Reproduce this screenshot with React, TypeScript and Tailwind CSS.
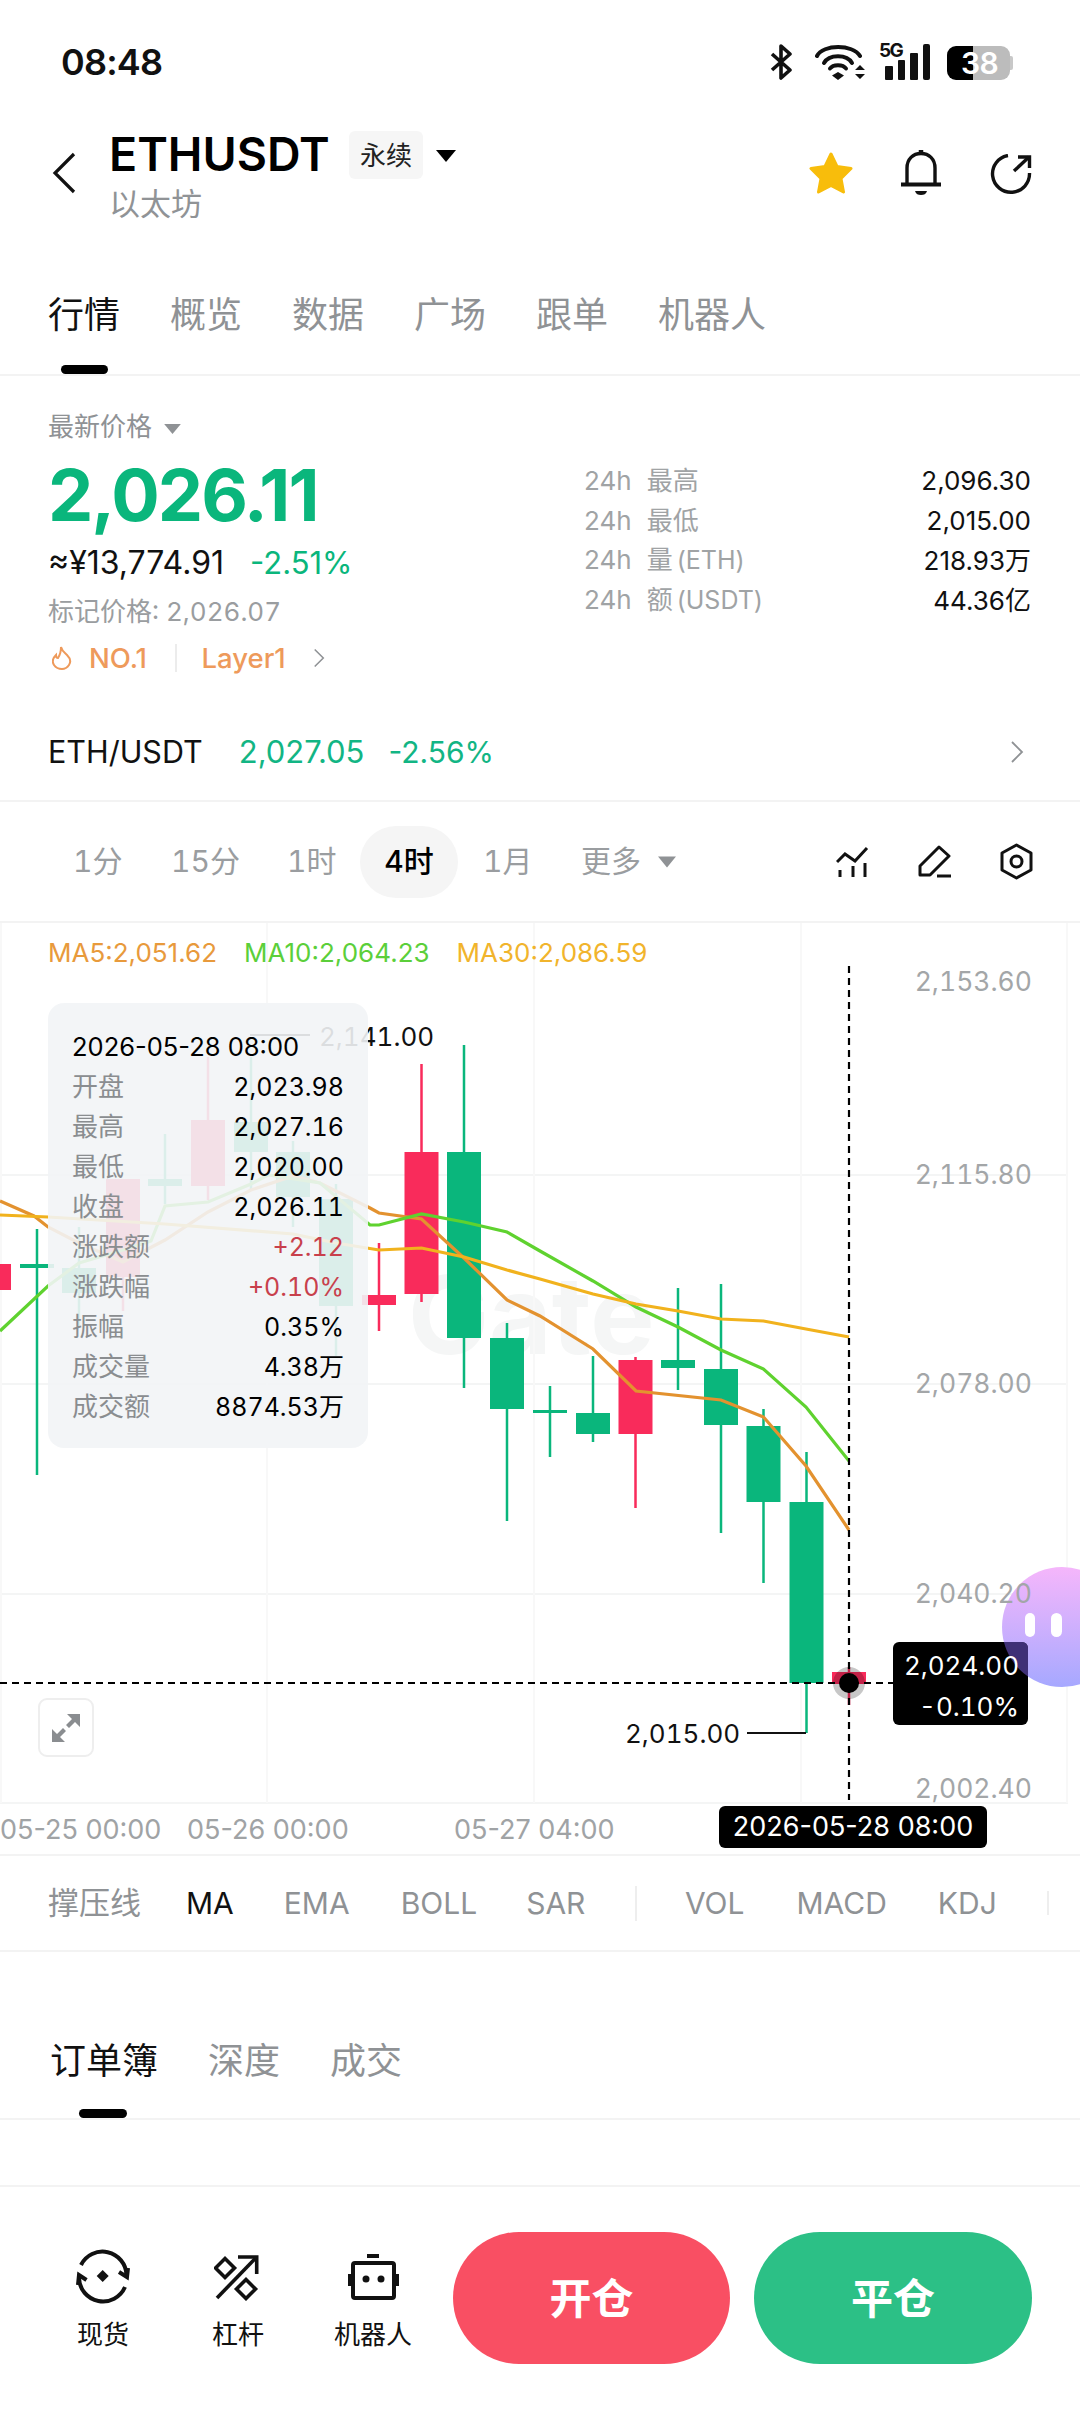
import { ReactNode } from "react";

const RED = "#f92b5b";
const GREEN = "#0ab67c";

// cx, wick top, wick bottom, body top, body bottom, colour (page coordinates)
const candles: [number, number, number, number, number, string][] = [
  [-6, 1235, 1300, 1264, 1290, RED],
  [37, 1229, 1475, 1264, 1268, GREEN],
  [79, 1227, 1327, 1268, 1293, GREEN],
  [123, 1179, 1311, 1179, 1277, RED],
  [165, 1134, 1204, 1179, 1186, GREEN],
  [208, 1057, 1200, 1120, 1186, RED],
  [251, 1057, 1190, 1122, 1152, GREEN],
  [293, 1141, 1227, 1152, 1197, GREEN],
  [336, 1184, 1356, 1199, 1306, GREEN],
  [379, 1243, 1331, 1295, 1305, RED],
  [421.5, 1064, 1302, 1152, 1294, RED],
  [464, 1045, 1388, 1152, 1338, GREEN],
  [507, 1323, 1521, 1338, 1409, GREEN],
  [550, 1386, 1457, 1410, 1413, GREEN],
  [593, 1356, 1442, 1413, 1434, GREEN],
  [635.5, 1357, 1508, 1360, 1434, RED],
  [678, 1288, 1390, 1360, 1368, GREEN],
  [721, 1284, 1533, 1369, 1425, GREEN],
  [763.5, 1409, 1583, 1426, 1502, GREEN],
  [806.5, 1452, 1733, 1502, 1683, GREEN],
  [849, 1667, 1705, 1672, 1684, RED],
];

const ma5 = "0,1201 34,1216 48,1227 79,1243 123,1262 165,1240 208,1212 251,1190 293,1176 320,1183 370,1208 379,1213 421.5,1219 465,1259 507,1300 540,1316 593,1349 636,1391 721,1400 763.5,1417 806,1466 849,1530";
const ma10 = "0,1331 48,1286 79,1263 123,1250 151,1241 165,1206 208,1202 251,1184 268,1175 320,1183 370,1225 379,1225 421.5,1214 464,1222 507,1232 540,1251 593,1281 636,1307 678,1327 721,1350 763.5,1369 806,1407 849,1461";
const ma30 = "0,1215 48,1217 165,1224 293,1234 336,1243 379,1250 421.5,1248 464,1257 507,1270 540,1279 593,1294 636,1304 678,1311 721,1319 763.5,1321 806,1329 849,1337";

const tooltipRows: [string, string, string][] = [
  ["开盘", "2,023.98", "text-black"],
  ["最高", "2,027.16", "text-black"],
  ["最低", "2,020.00", "text-black"],
  ["收盘", "2,026.11", "text-black"],
  ["涨跌额", "+2.12", "text-[#c8404c]"],
  ["涨跌幅", "+0.10%", "text-[#c8404c]"],
  ["振幅", "0.35%", "text-black"],
  ["成交量", "4.38万", "text-black"],
  ["成交额", "8874.53万", "text-black"],
];

const stats: [string, string, string][] = [
  ["最高", "", "2,096.30"],
  ["最低", "", "2,015.00"],
  ["量", "(ETH)", "218.93万"],
  ["额", "(USDT)", "44.36亿"],
];

function Triangle({ className }: { className: string }) {
  return (
    <svg viewBox="0 0 20 12" className={className} fill="currentColor">
      <path d="M0 0h20L10 12z" />
    </svg>
  );
}

function Chevron({ className }: { className: string }) {
  return (
    <svg viewBox="0 0 14 22" className={className} fill="none" stroke="currentColor" strokeWidth="1.8">
      <path d="M2 1l10 10L2 21" />
    </svg>
  );
}

function StatusBar() {
  return (
    <div className="flex h-[100px] items-start justify-between pl-[61px] pr-[67px] pt-[44px]">
      <span className="text-[36px] font-semibold leading-[36px] tracking-[-0.8px] text-[#111]">08:48</span>
      <div className="flex items-start">
        <svg viewBox="0 0 22 36" className="h-[36px] w-[22px]" fill="none" stroke="#111" strokeWidth="3.6" strokeLinejoin="round">
          <path d="M2 10l18 16-9 8V2l9 8L2 26" />
        </svg>
        <svg viewBox="815 44 52 36" className="ml-[23px] h-[36px] w-[52px]" fill="none" stroke="#111" strokeWidth="4" strokeLinecap="round">
          <path d="M817 56C823 44 853 44 860 56" />
          <path d="M824 63C829 54 847 54 852 63" />
          <path d="M830 68.5C833 64 843 64 846 68.5" />
          <path d="M838 72l6 3.5-6 4.5-6-4.5z" fill="#111" stroke="none" />
          <path d="M860 65l5 5h-10zM860 79l5-5h-10z" fill="#111" stroke="none" />
        </svg>
        <div className="relative ml-[12px] h-[36px] w-[51px]">
          <span className="absolute left-0 top-[-3px] text-[19px] font-bold leading-[20px] tracking-[-1.6px] text-[#111]">5G</span>
          <div className="absolute bottom-0 right-0 flex items-end gap-[5px]">
            <div className="h-[14px] w-[7.5px] rounded-[1px] bg-[#111]" />
            <div className="h-[20px] w-[7.5px] rounded-[1px] bg-[#111]" />
            <div className="h-[27px] w-[7.5px] rounded-[1px] bg-[#111]" />
            <div className="h-[36px] w-[7.5px] rounded-[2px] bg-[#111]" />
          </div>
        </div>
        <div className="relative ml-[17px] mt-[2px] flex h-[34px] w-[66px]">
          <div className="h-full w-[26px] rounded-l-[9px] bg-black" />
          <div className="h-full w-[37px] rounded-r-[9px] bg-[#bcbcbc]" />
          <div className="mt-[10px] h-[14px] w-[3px] rounded-r-[2px] bg-[#c8c8c8]" />
          <span className="absolute left-[14px] top-0 text-[30px] font-semibold leading-[34px] tracking-[-0.5px] text-white">38</span>
        </div>
      </div>
    </div>
  );
}

function Header() {
  return (
    <div className="flex h-[170px] items-start pl-[52px] pr-[48px]">
      <svg viewBox="0 0 24 42" className="mt-[52px] h-[42px] w-[24px]" fill="none" stroke="#111" strokeWidth="3.2">
        <path d="M22 2L3 21l19 19" />
      </svg>
      <div className="ml-[33px] mt-[26px]">
        <div className="flex items-start">
          <span className="w-[220px] text-[46.5px] font-semibold leading-[56px] text-black">ETHUSDT</span>
          <span className="ml-[20px] mt-[5px] flex h-[48px] w-[74px] items-center justify-center rounded-[6px] bg-[#f6f6f6] text-[26px] text-[#222]">永续</span>
          <Triangle className="ml-[13px] mt-[24px] h-[12px] w-[20px] text-black" />
        </div>
        <div className="mt-[2px] text-[31px] leading-[40px] text-[#909396]">以太坊</div>
      </div>
      <div className="ml-auto mt-[50px] flex items-start">
        <svg viewBox="0 0 46 42" className="mt-[2px] h-[42px] w-[46px]" fill="#f8bd0b" stroke="#f8bd0b" strokeWidth="3" strokeLinejoin="round">
          <path d="M23 2l6 12.500 14 2-10 10 2.500 13.500L23 33.500 10.500 40 13 26.500 3 16.500l14-2z" />
        </svg>
        <svg viewBox="901 150 40 45" className="ml-[47px] h-[45px] w-[40px]" fill="none" stroke="#111" strokeWidth="3.4">
          <path d="M921 150v5" strokeWidth="4.500" />
          <path d="M907 184v-16c0-9 6-14.500 14-14.500s14 5.500 14 14.500v16" />
          <path d="M901 184.500h40" strokeWidth="4" />
          <path d="M915 191h12c-1 3-3 4-6 4s-5-1-6-4z" fill="#111" stroke="none" />
        </svg>
        <svg viewBox="990 154 42 40" className="ml-[49px] mt-[4px] h-[40px] w-[42px]" fill="none" stroke="#111" strokeWidth="3.4">
          <path d="M1008 155.500A18.500 18.500 0 1 0 1029.500 173" />
          <path d="M1014 171l15-14" />
          <path d="M1018 157h11.500v11" />
        </svg>
      </div>
    </div>
  );
}

function Tabs() {
  const tabs = ["行情", "概览", "数据", "广场", "跟单", "机器人"];
  return (
    <div className="relative h-[106px] border-b-2 border-[#f3f3f3]">
      <div className="flex gap-[50px] pl-[48px] pt-[20px]">
        {tabs.map((t, i) => (
          <span key={t} className={i === 0 ? "text-[36px] leading-[50px] text-[#111]" : "text-[36px] leading-[50px] text-[#8f9295]"}>
            {t}
          </span>
        ))}
      </div>
      <div className="absolute left-[61px] top-[95px] h-[9px] w-[47px] rounded-[5px] bg-black" />
    </div>
  );
}

function PriceBlock() {
  return (
    <div className="flex h-[324px] justify-between pl-[48px] pr-[49px]">
      <div>
        <div className="mt-[35px] flex items-center text-[26px] leading-[32px] text-[#8f9295]">
          最新价格
          <Triangle className="ml-[12px] mt-[4px] h-[10px] w-[17px] text-[#8f9295]" />
        </div>
        <div className="mt-[8px] text-[72px] font-bold leading-[88px] tracking-[-2px] text-[#0ab67c]">2,026.11</div>
        <div className="mt-[4px] flex items-center leading-[40px]">
          <span className="text-[32px] text-[#111]">≈¥13,774.91</span>
          <span className="ml-[26px] text-[31px] text-[#0ab67c]">-2.51%</span>
        </div>
        <div className="mt-[9px] text-[26px] leading-[40px] tabular-nums text-[#9a9da0]">标记价格: 2,026.07</div>
        <div className="mt-[8px] flex items-center text-[27.5px] font-medium leading-[36px] text-[#ee9a5b]">
          <svg viewBox="0 0 20 24" className="ml-[4px] h-[24px] w-[20px]" fill="none" stroke="#ee9a5b" strokeWidth="2">
            <path d="M9 1c1 4 3 5 6 8 3 3 4 7 2 10-2 3-5 4-7 4s-6-1-8-4c-2-3-1-7 2-10 0 2 1 3 2 3 2-3 3-7 3-11z" />
          </svg>
          <span className="ml-[17px]">NO.1</span>
          <div className="ml-[28px] h-[28px] w-[1.5px] bg-[#ececec]" />
          <span className="ml-[25px]">Layer1</span>
          <Chevron className="ml-[27px] h-[20px] w-[12px] text-[#8f9295]" />
        </div>
      </div>
      <div className="mt-[84px] w-[447px]">
        {stats.map(([label, unit, value]) => (
          <div key={label} className="flex h-[40px] items-center justify-between text-[26px]">
            <span className="text-[#a0a3a5]">
              <span className="mr-[15px]">24h</span>
              {label}
              {unit && <span className="ml-[4px] text-[25px]">{unit}</span>}
            </span>
            <span className="text-[#111]">{value}</span>
          </div>
        ))}
      </div>
    </div>
  );
}

function SpotRow() {
  return (
    <div className="flex h-[102px] items-center border-b-2 border-[#f3f3f3] pl-[48px] pr-[56px] pt-[4px]">
      <span className="text-[30.5px] text-[#111]">ETH/USDT</span>
      <span className="ml-[36px] text-[31px] text-[#12b584]">2,027.05</span>
      <span className="ml-[24px] text-[30px] text-[#12b584]">-2.56%</span>
      <Chevron className="ml-auto h-[22px] w-[14px] text-[#8f9295]" />
    </div>
  );
}

function Timeframes() {
  return (
    <div className="flex h-[121px] items-center border-b-2 border-[#f3f3f3] pl-[73px] pr-[47px] text-[30px] tabular-nums text-[#9a9da0]">
      <span className="w-[98px]">1分</span>
      <span className="w-[116px]">15分</span>
      <span className="w-[73px]">1时</span>
      <span className="flex h-[72px] w-[98px] items-center justify-center rounded-[36px] bg-[#f5f5f5] font-medium text-black">4时</span>
      <span className="ml-[25px] w-[98px]">1月</span>
      <span>更多</span>
      <Triangle className="ml-[17px] h-[12px] w-[18px] text-[#8f9295]" />
      <svg viewBox="836 845 33 31" className="ml-auto h-[31px] w-[33px]" fill="none" stroke="#111" strokeWidth="3">
        <path d="M837 861l8-8 10 7 12-13" />
        <path d="M840 869v7M853 865v11M865 862v14" />
      </svg>
      <svg viewBox="918 844 34 33" className="ml-[49px] h-[33px] w-[34px]" fill="none" stroke="#111" strokeWidth="3">
        <path d="M920 865l19-19 10 9-19 19h-10z" strokeLinejoin="round" />
        <path d="M937 875h14" />
      </svg>
      <svg viewBox="1000 843 33 37" className="ml-[48px] h-[37px] w-[33px]" fill="none" stroke="#111" strokeWidth="3">
        <path d="M1016.500 845l14.500 8v17l-14.500 8-14.500-8v-17z" strokeLinejoin="round" />
        <circle cx="1016.500" cy="861.500" r="5.500" />
      </svg>
    </div>
  );
}

function Chart() {
  return (
    <div className="relative h-[931px] overflow-hidden">
      <div className="absolute left-[408px] top-[338px] text-[108px] font-bold leading-[108px] text-[#f5f6f6]">Gate</div>

      <svg viewBox="0 923 1080 931" className="absolute left-0 top-0 h-[931px] w-[1080px]" fill="none">
        {[1175, 1384, 1594, 1803].map((y) => (
          <line key={y} x1="0" x2="1068" y1={y} y2={y} stroke="#f4f5f5" strokeWidth="2" />
        ))}
        {[1, 267, 534, 801, 1067].map((x) => (
          <line key={x} x1={x} x2={x} y1="923" y2="1803" stroke="#f8f8f8" strokeWidth="2" />
        ))}
        {candles.map(([cx, wt, wb, bt, bb, c]) => (
          <g key={cx} fill={c}>
            <rect x={cx - 1.25} y={wt} width="2.5" height={wb - wt} />
            <rect x={cx - 17} y={bt} width="34" height={bb - bt} />
          </g>
        ))}
        <polyline points={ma5} stroke="#e3922f" strokeWidth="3.2" />
        <polyline points={ma10} stroke="#5fd22f" strokeWidth="3.2" />
        <polyline points={ma30} stroke="#f1b21d" strokeWidth="3.2" />
        <line x1="849" x2="849" y1="966" y2="1800" stroke="#000" strokeWidth="2.2" strokeDasharray="7 5" />
        <line x1="0" x2="893" y1="1683" y2="1683" stroke="#000" strokeWidth="2.2" strokeDasharray="7 5" />
        <circle cx="849" cy="1683" r="16" fill="#000" fillOpacity="0.22" />
        <circle cx="849" cy="1683" r="10" fill="#000" />
        <line x1="250" x2="310" y1="1035" y2="1035" stroke="#111" strokeWidth="2" />
        <line x1="747" x2="806" y1="1733" y2="1733" stroke="#111" strokeWidth="2" />
      </svg>

      <div className="absolute left-[48px] top-[13px] flex text-[26px] leading-[34px]">
        <span className="text-[#e89a3c]">MA5:2,051.62</span>
        <span className="ml-[27px] text-[#5bcf3a]">MA10:2,064.23</span>
        <span className="ml-[27px] text-[#f1b42c]">MA30:2,086.59</span>
      </div>

      <div className="absolute left-[319px] top-[96px] text-[26px] leading-[36px] tabular-nums text-[#111]">2,141.00</div>

      <div className="absolute left-[48px] top-[80px] h-[445px] w-[320px] rounded-[16px] bg-[#f2f4f6]/90 px-[24px] pt-[24px] text-[26px] leading-[40px]">
        <div className="text-[25.5px] text-black">2026-05-28 08:00</div>
        {tooltipRows.map(([label, value, color]) => (
          <div key={label} className="flex justify-between">
            <span className="text-[#8a8d90]">{label}</span>
            <span className={`text-[25px] tabular-nums ${color}`}>{value}</span>
          </div>
        ))}
      </div>

      <div className="absolute left-[1002px] top-[644px] h-[120px] w-[120px] rounded-full bg-gradient-to-b from-[#f5b6fb] to-[#a6a8ff]">
        <div className="absolute left-[23px] top-[46px] h-[24px] w-[10px] rounded-full bg-white" />
        <div className="absolute left-[49px] top-[46px] h-[24px] w-[11px] rounded-full bg-white" />
      </div>

      <div className="absolute right-[48px] top-[40px] text-[26.5px] leading-[36px] tabular-nums text-[#a3a6a8]">2,153.60</div>
      <div className="absolute right-[48px] top-[233px] text-[26.5px] leading-[36px] tabular-nums text-[#a3a6a8]">2,115.80</div>
      <div className="absolute right-[48px] top-[442px] text-[26.5px] leading-[36px] tabular-nums text-[#a3a6a8]">2,078.00</div>
      <div className="absolute right-[48px] top-[652px] text-[26.5px] leading-[36px] tabular-nums text-[#a3a6a8]">2,040.20</div>
      <div className="absolute right-[48px] top-[847px] text-[26.5px] leading-[36px] tabular-nums text-[#a3a6a8]">2,002.40</div>

      <div className="absolute left-[893px] top-[719px] h-[83px] w-[135px] overflow-hidden rounded-[6px] bg-black pr-[9px] pt-[3px] text-right text-[26px] leading-[41px] text-white">
        <div className="absolute left-[109px] top-[-75px] h-[120px] w-[120px] rounded-full bg-[#5a45a8]/70" />
        <div className="relative tabular-nums">2,024.00</div>
        <div className="relative tabular-nums">-0.10%</div>
      </div>

      <div className="absolute left-[625px] top-[793px] text-[26px] leading-[36px] tabular-nums text-[#111]">2,015.00</div>

      <div className="absolute left-[38px] top-[775px] flex h-[59px] w-[56px] items-center justify-center rounded-[9px] border-2 border-[#eeeeee] bg-white">
        <svg viewBox="0 0 30 30" className="h-[30px] w-[30px]" fill="#8a8d90">
          <path d="M29 1v13l-5-5-6 6-3-3 6-6-5-5z" />
          <path d="M1 29V16l5 5 6-6 3 3-6 6 5 5z" />
        </svg>
      </div>

      <div className="absolute left-0 top-[889px] text-[27px] leading-[36px] text-[#a0a3a5]">05-25 00:00</div>
      <div className="absolute left-[187px] top-[889px] text-[27px] leading-[36px] text-[#a0a3a5]">05-26 00:00</div>
      <div className="absolute left-[454px] top-[889px] text-[27px] leading-[36px] text-[#a0a3a5]">05-27 04:00</div>
      <div className="absolute left-[719px] top-[883px] flex h-[42px] w-[268px] items-center justify-center rounded-[6px] bg-black text-[27px] text-white">2026-05-28 08:00</div>
    </div>
  );
}

function Indicators() {
  return (
    <div className="flex h-[98px] items-center border-y-2 border-[#f3f3f3] pl-[48px] text-[30px] text-[#8f9295]">
      <span className="text-[31px]">撑压线</span>
      <span className="ml-[45px] text-[#111]">MA</span>
      <span className="ml-[50px]">EMA</span>
      <span className="ml-[51px]">BOLL</span>
      <span className="ml-[49px]">SAR</span>
      <div className="ml-[50px] h-[35px] w-[1.5px] bg-[#eeeeee]" />
      <span className="ml-[48px]">VOL</span>
      <span className="ml-[52px]">MACD</span>
      <span className="ml-[51px]">KDJ</span>
      <div className="ml-[50px] h-[24px] w-[2px] bg-[#eeeeee]" />
    </div>
  );
}

function BookTabs() {
  return (
    <div className="relative h-[168px] border-b-2 border-[#f3f3f3]">
      <div className="flex gap-[50px] pl-[50px] pt-[84px] text-[36px] leading-[50px] text-[#8f9295]">
        <span className="text-[#111]">订单簿</span>
        <span>深度</span>
        <span>成交</span>
      </div>
      <div className="absolute left-[79px] top-[157px] h-[9px] w-[48px] rounded-[5px] bg-black" />
    </div>
  );
}

function ToolButton({ label, children, className }: { label: string; children: ReactNode; className: string }) {
  return (
    <div className={`flex flex-col items-center ${className}`}>
      <div className="flex h-[56px] items-center">{children}</div>
      <span className="mt-[13px] text-[26px] leading-[34px] text-[#111]">{label}</span>
    </div>
  );
}

function BottomBar() {
  return (
    <div className="mt-[65px] flex h-[225px] border-t-2 border-[#f3f3f3] pl-[77px] pr-[48px] pt-[45px]">
      <div className="mt-[17px] flex h-[110px] items-start">
        <ToolButton label="现货" className="w-[52px]">
          <svg viewBox="75 2248 56 56" className="h-[56px] w-[56px]" fill="none" stroke="#111" strokeWidth="4">
            <path d="M81 2264A24 24 0 0 1 126.500 2274" />
            <path d="M119 2271l8 5 1-9" />
            <path d="M125 2286A24 24 0 0 1 79 2277" />
            <path d="M86.500 2279l-7.500-5-1 10" />
            <path d="M102.700 2269l6 6-6 6-6-6z" fill="#111" stroke="none" />
          </svg>
        </ToolButton>
        <ToolButton label="杠杆" className="ml-[83px] w-[52px]">
          <svg viewBox="214 2252 48 48" className="h-[48px] w-[48px]" fill="none" stroke="#111" strokeWidth="3.6">
            <path d="M217 2297l39.700-41" />
            <path d="M238 2256h18.700v17" />
            <path d="M225 2257.500l9.500 9.500-9.500 9.500-9.500-9.500z" />
            <path d="M246 2278.500l9.500 9.500-9.500 9.500-9.500-9.500z" />
          </svg>
        </ToolButton>
        <ToolButton label="机器人" className="ml-[69px] w-[80px]">
          <svg viewBox="346 2250 54 50" className="h-[50px] w-[54px]" fill="none" stroke="#111" strokeWidth="4">
            <rect x="367" y="2252" width="12" height="4" fill="#111" stroke="none" />
            <rect x="353" y="2261" width="41" height="35" rx="2" />
            <rect x="348" y="2272" width="4" height="12" fill="#111" stroke="none" />
            <rect x="395" y="2272" width="4" height="12" fill="#111" stroke="none" />
            <circle cx="366" cy="2277" r="3.500" fill="#111" stroke="none" />
            <circle cx="381" cy="2277" r="3.500" fill="#111" stroke="none" />
          </svg>
        </ToolButton>
      </div>
      <div className="ml-auto flex h-[132px] gap-[24px] text-[42px] font-bold text-white">
        <button className="w-[277px] rounded-full bg-[#f94f63]">开仓</button>
        <button className="w-[278px] rounded-full bg-[#2cc086]">平仓</button>
      </div>
    </div>
  );
}

export default function App() {
  return (
    <div className="h-[2412px] w-[1080px] overflow-hidden bg-white font-['Inter','Noto_Sans_CJK_SC',sans-serif]">
      <StatusBar />
      <Header />
      <Tabs />
      <PriceBlock />
      <SpotRow />
      <Timeframes />
      <Chart />
      <Indicators />
      <BookTabs />
      <BottomBar />
    </div>
  );
}
